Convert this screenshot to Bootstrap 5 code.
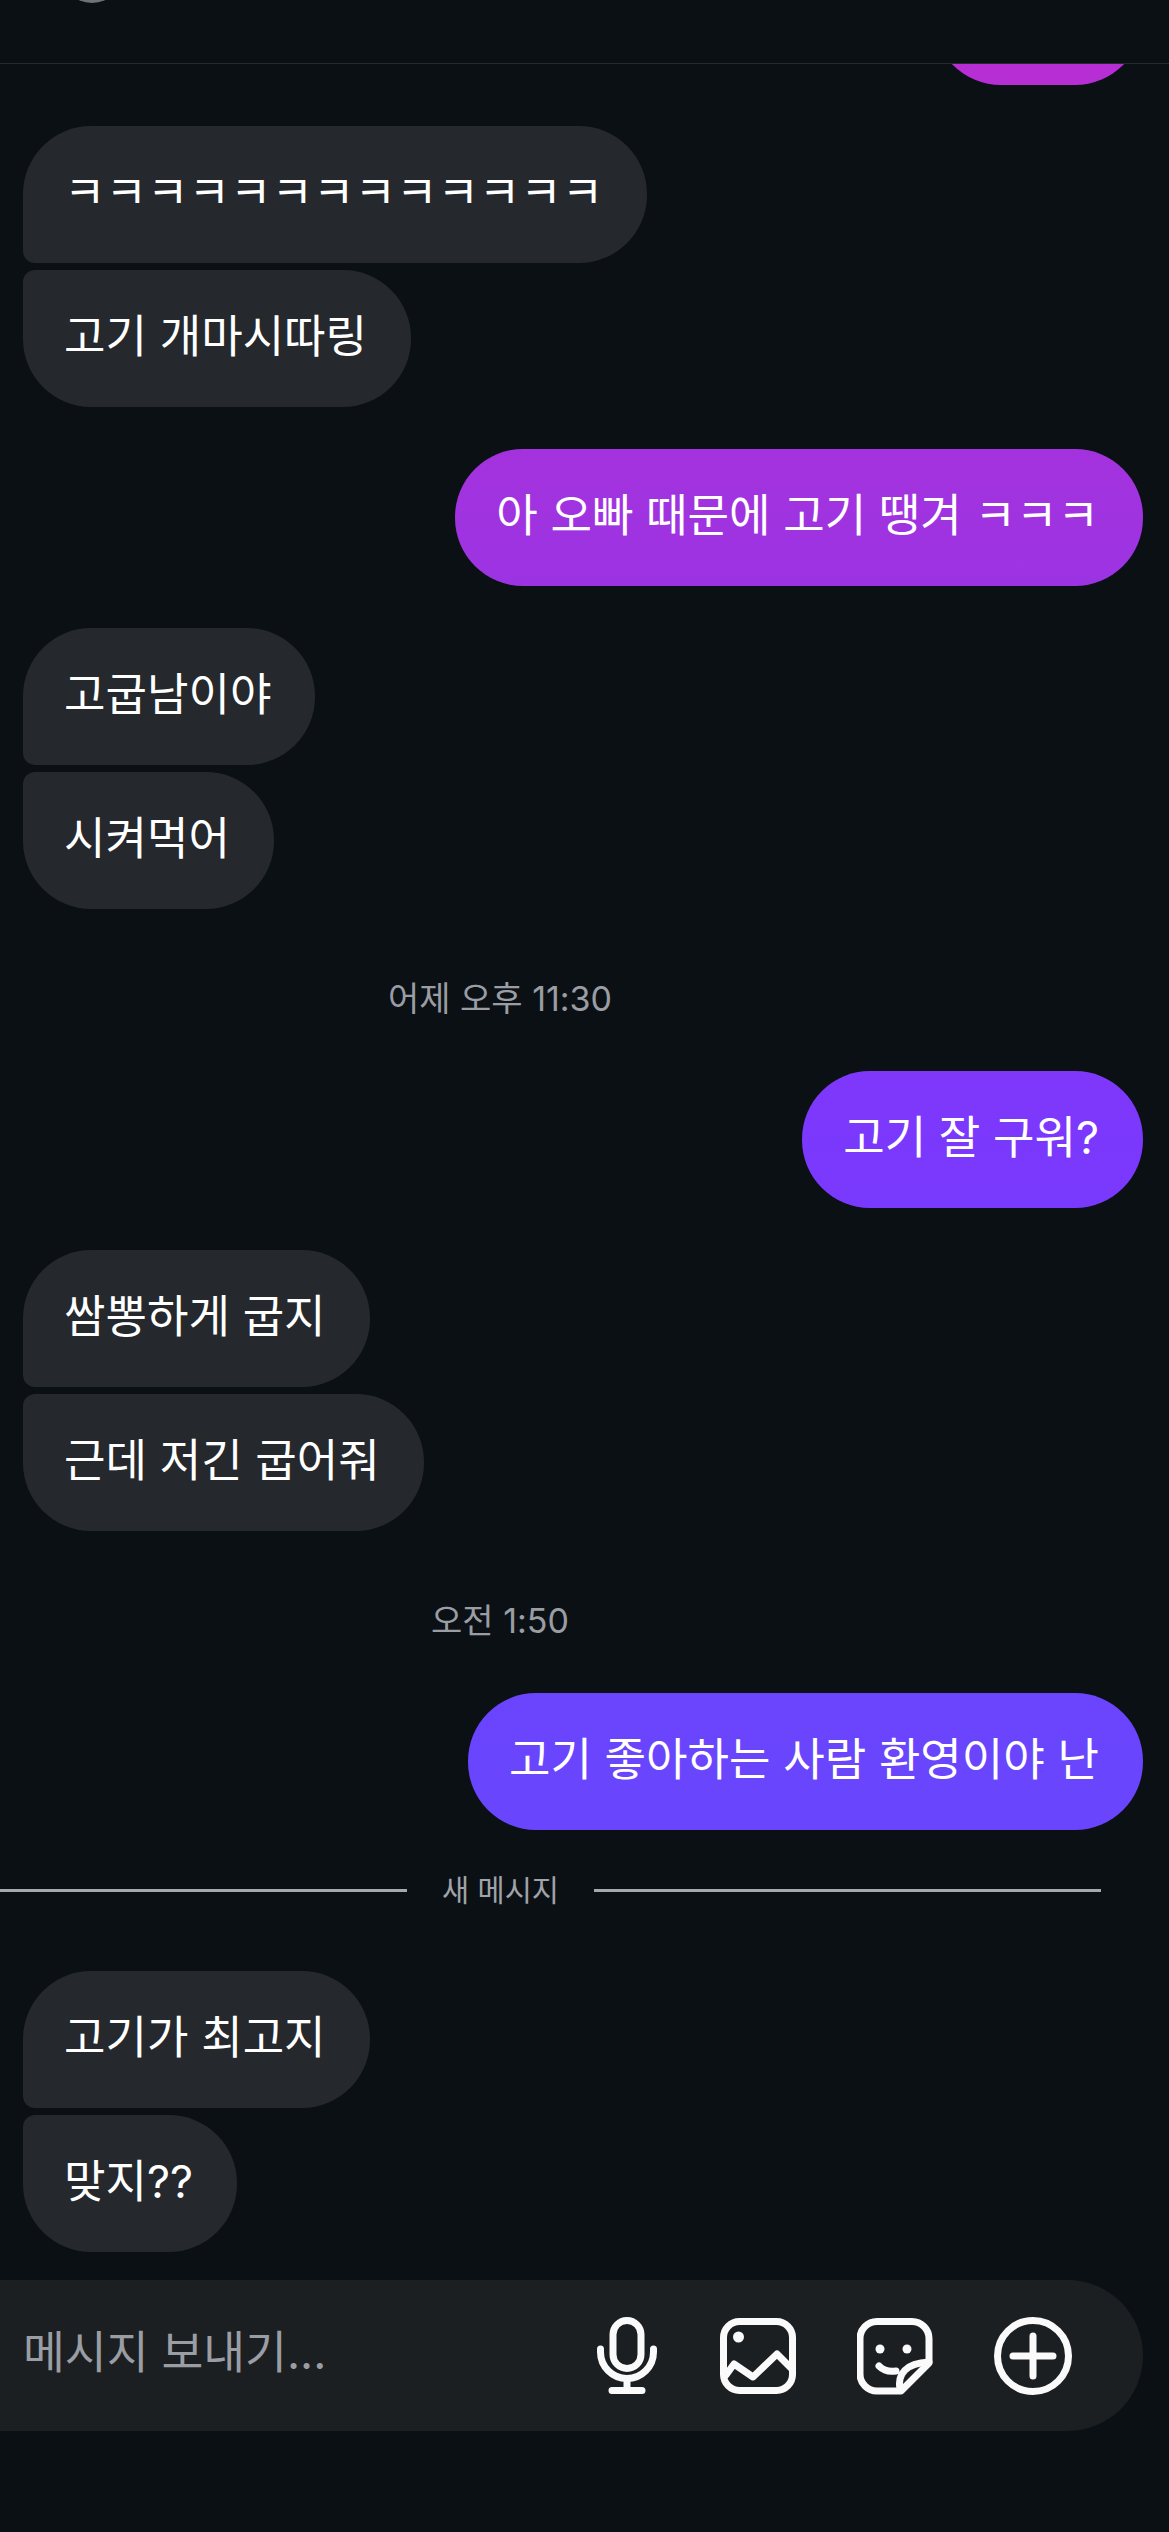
<!DOCTYPE html>
<html lang="ko">
<head>
    <meta charset="UTF-8">
    <meta name="viewport" content="width=device-width, initial-scale=1.0">
    <title>메시지</title>

    <link href="https://cdn.jsdelivr.net/npm/bootstrap@5.3.3/dist/css/bootstrap.min.css" rel="stylesheet">

    <style>
        body {
            background-color: #0b1015;
            color: #fff;
            font-family: Inter, "Noto Sans CJK KR", sans-serif;
            height: 2532px;
        }

        .top-bar {
            height: 64px;
            border-bottom: 1px solid #26292e;
        }

        .top-avatar {
            width: 64px;
            height: 64px;
            margin-top: -61px;
            margin-left: 60px;
            background-color: #6f7278;
        }

        .chat-scroll {
            padding: 0 26px 0 23px;
        }

        .bubble-msg {
            font-size: 45.1px;
            line-height: 49px;
            padding: 42px 44px 46px 41px;
            border-radius: 68px;
            white-space: nowrap;
        }

        .bubble-in {
            background-color: #25282d;
            align-self: flex-start;
        }

        .bubble-in.group-first {
            border-bottom-left-radius: 12px;
        }

        .bubble-in.group-last {
            border-top-left-radius: 12px;
            margin-top: 7px;
        }

        .bubble-out {
            align-self: flex-end;
            padding-left: 41px;
            background: linear-gradient(180deg, #ba2ed2 0, #a033e0 520px, #7b38fd 1140px, #6945fd 1760px) fixed;
        }

        .bubble-clipped {
            margin-top: -115px;
            width: 210px;
            height: 136px;
        }

        .gap-group {
            margin-top: 42px;
        }

        .time-label {
            font-size: 34px;
            line-height: 40px;
            color: #9a9da3;
            text-align: center;
            padding-right: 166px;
            margin-top: 70px;
            margin-bottom: 52px;
        }

        .new-rule {
            display: flex;
            align-items: center;
            margin: 40px 42px 61px -123px;
            font-size: 29.5px;
            line-height: 40px;
            color: #a0a3a9;
        }

        .new-rule i {
            flex: 1;
            height: 3px;
            background-color: #a5a8ae;
        }

        .new-rule span {
            padding: 0 35px;
        }

        .compose-bar {
            width: 1143px;
            height: 151px;
            margin-top: 28px;
            padding: 0 71px 4px 23px;
            background-color: #1c1f21;
            border-radius: 0 76px 76px 0;
        }

        .compose-hint {
            font-size: 45.5px;
            color: #9a9da3;
        }

        .compose-icons {
            gap: 61px;
            margin-top: 4px;
        }

        .compose-icons svg {
            display: block;
            fill: none;
            stroke: #fafafa;
            stroke-width: 7;
            stroke-linecap: round;
            stroke-linejoin: round;
        }

        .compose-icons .mic-icon {
            margin-right: 2px;
        }

        .compose-icons .dot {
            fill: #fafafa;
            stroke: none;
        }
    </style>
</head>
<body>
    <div class="chat-page overflow-hidden">
        <div class="top-bar overflow-hidden">
            <div class="top-avatar rounded-circle"></div>
        </div>

        <div class="chat-scroll d-flex flex-column overflow-hidden">
            <div class="bubble-msg bubble-out bubble-clipped"></div>

            <div class="bubble-msg bubble-in group-first" style="margin-top: 41px">ㅋㅋㅋㅋㅋㅋㅋㅋㅋㅋㅋㅋㅋ</div>
            <div class="bubble-msg bubble-in group-last">고기 개마시따링</div>

            <div class="bubble-msg bubble-out gap-group">아 오빠 때문에 고기 땡겨 ㅋㅋㅋ</div>

            <div class="bubble-msg bubble-in group-first gap-group">고굽남이야</div>
            <div class="bubble-msg bubble-in group-last">시켜먹어</div>

            <div class="time-label">어제 오후 11:30</div>

            <div class="bubble-msg bubble-out">고기 잘 구워?</div>

            <div class="bubble-msg bubble-in group-first gap-group">쌈뽕하게 굽지</div>
            <div class="bubble-msg bubble-in group-last">근데 저긴 굽어줘</div>

            <div class="time-label">오전 1:50</div>

            <div class="bubble-msg bubble-out">고기 좋아하는 사람 환영이야 난</div>

            <div class="new-rule">
                <i></i><span>새 메시지</span><i></i>
            </div>

            <div class="bubble-msg bubble-in group-first">고기가 최고지</div>
            <div class="bubble-msg bubble-in group-last">맞지??</div>
        </div>

        <div class="compose-bar d-flex align-items-center justify-content-between">
            <span class="compose-hint">메시지 보내기...</span>
            <div class="compose-icons d-flex align-items-center">
                <svg class="mic-icon" width="60" height="78" viewBox="0 0 60 78">
                    <rect x="16" y="3.5" width="28" height="48" rx="14"/>
                    <path d="M3.5 32v3a26.5 26.5 0 0 0 53 0v-3"/>
                    <path d="M30 62v11M15 73.5h30"/>
                </svg>
                <svg width="76" height="78" viewBox="0 0 76 78">
                    <rect x="3.5" y="4.5" width="69" height="69" rx="16"/>
                    <circle class="dot" cx="18.5" cy="20" r="5.5"/>
                    <path d="M6 58l8-11 19 13 24-23 16 16"/>
                </svg>
                <svg width="76" height="78" viewBox="0 0 76 78">
                    <path d="M20 4.5h35a17 17 0 0 1 17 17V46L44 74H20A17 17 0 0 1 3 57V21.5A17 17 0 0 1 20 4.5z"/>
                    <path d="M43 73c-3-16 6-27 29-28"/>
                    <path d="M22 49c5 5 11 6 17 5"/>
                    <circle class="dot" cx="23" cy="32" r="4.5"/>
                    <circle class="dot" cx="50" cy="32" r="4.5"/>
                </svg>
                <svg width="78" height="78" viewBox="0 0 78 78">
                    <circle cx="39" cy="39" r="35.5"/>
                    <path d="M39 19v40M19 39h40"/>
                </svg>
            </div>
        </div>
    </div>

    <script src="https://cdn.jsdelivr.net/npm/bootstrap@5.3.3/dist/js/bootstrap.bundle.min.js"></script>
</body>
</html>
